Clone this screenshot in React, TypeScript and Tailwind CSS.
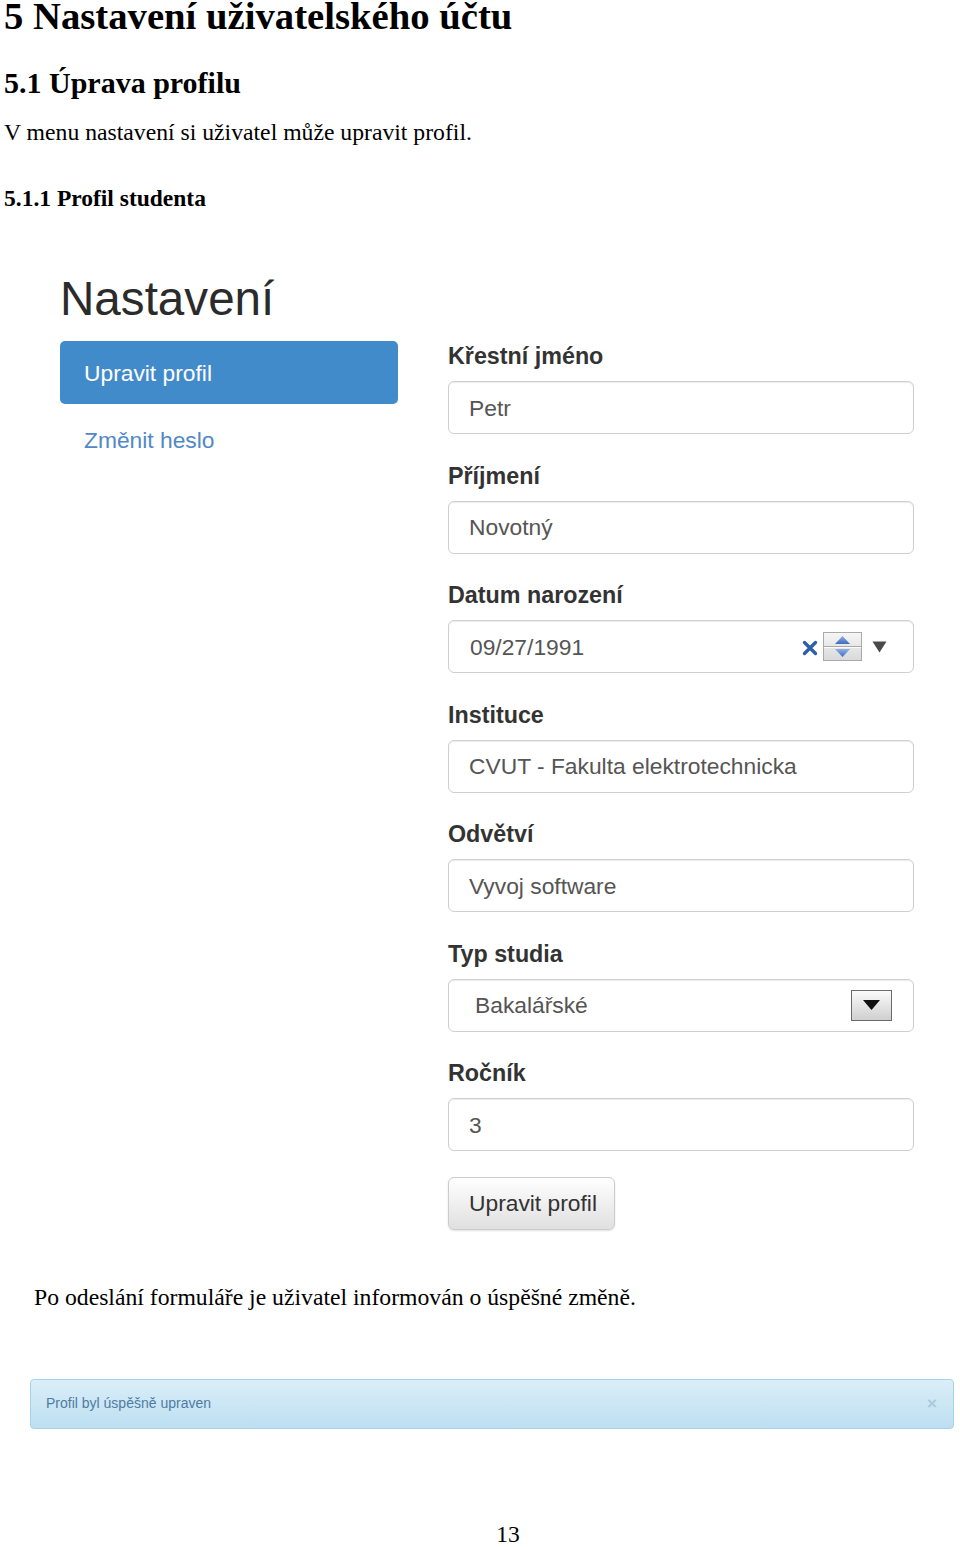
import type { ReactNode } from 'react'

// Page 13 of a user manual: chapter heading, a screenshot of the settings
// form, then the success alert shown after submitting.

function Field({ label, children }: { label: string; children: ReactNode }) {
  return (
    <div className="mb-[25.5px]">
      <div className="mb-[9px] text-[23.3px] font-bold leading-[32px] text-[#333]">{label}</div>
      {children}
    </div>
  )
}

function Box({ children, className = '' }: { children: ReactNode; className?: string }) {
  return (
    <div
      className={`flex h-[53px] items-center rounded-[6px] border-[1.5px] border-[#cfcfcf] bg-white text-[22.8px] text-[#555] shadow-[inset_0_1px_1px_rgba(0,0,0,0.08)] ${className}`}
    >
      {children}
    </div>
  )
}

function DateControls() {
  return (
    <div className="ml-auto flex items-center pr-[26px]">
      <svg width="16" height="16" viewBox="0 0 16 16" className="mr-[5px] mt-[2px]">
        <path d="M2.5 2.5 L13.5 13.5 M13.5 2.5 L2.5 13.5" stroke="#2f5fa8" strokeWidth="3.4" strokeLinecap="round" />
      </svg>
      <svg width="39" height="29" viewBox="0 0 39 29">
        <defs>
          <linearGradient id="spin" x1="0" y1="0" x2="0" y2="1">
            <stop offset="0" stopColor="#f6f6f6" />
            <stop offset="1" stopColor="#d9d9d9" />
          </linearGradient>
          <linearGradient id="arr" x1="0" y1="0" x2="0" y2="1">
            <stop offset="0" stopColor="#8fb0e6" />
            <stop offset="1" stopColor="#3f6cc0" />
          </linearGradient>
        </defs>
        <rect x="0.5" y="0.5" width="38" height="28" fill="url(#spin)" stroke="#a9a9a9" />
        <line x1="1" y1="14.5" x2="38" y2="14.5" stroke="#a9a9a9" />
        <line x1="1" y1="15.5" x2="38" y2="15.5" stroke="#fafafa" />
        <path d="M12 12 L19.5 4 L27 12 Z" fill="url(#arr)" />
        <path d="M12 17 L19.5 25 L27 17 Z" fill="url(#arr)" />
      </svg>
      <svg width="15" height="12" viewBox="0 0 15 12" className="ml-[10px]">
        <path d="M0.5 0.5 L14.5 0.5 L7.5 11.5 Z" fill="#4a4a4a" />
      </svg>
    </div>
  )
}

function SelectButton() {
  return (
    <div className="ml-auto mr-[21px] flex h-[31px] w-[41px] items-center justify-center border border-[#6b6b6b] bg-gradient-to-b from-[#fbfbfb] to-[#cfcfcf]">
      <svg width="17" height="10" viewBox="0 0 17 10">
        <path d="M0 0 L17 0 L8.5 10 Z" fill="#111" />
      </svg>
    </div>
  )
}

function SettingsScreenshot() {
  return (
    <section className="mt-[64.7px] pl-[60px] font-['Liberation_Sans',Arial,sans-serif]">
      <div className="text-[47.6px] leading-[50px] text-[#2b2b2b]">Nastavení</div>
      <div className="mt-[16.3px] grid grid-cols-[338px_466px] gap-x-[50px]">
        <nav className="flex flex-col">
          <div className="mt-[1px] flex h-[63px] items-center rounded-[5px] bg-[#428bca] pl-[24px] text-[22.8px] text-white">
            Upravit profil
          </div>
          <div className="mt-[20px] pl-[24px] text-[22.8px] leading-[32px] text-[#5189c6]">Změnit heslo</div>
        </nav>
        <div className="flex flex-col">
          <Field label="Křestní jméno">
            <Box className="pl-[20px]">Petr</Box>
          </Field>
          <Field label="Příjmení">
            <Box className="pl-[20px]">Novotný</Box>
          </Field>
          <Field label="Datum narození">
            <Box className="pl-[21px]">
              <span>09/27/1991</span>
              <DateControls />
            </Box>
          </Field>
          <Field label="Instituce">
            <Box className="pl-[20px]">CVUT - Fakulta elektrotechnicka</Box>
          </Field>
          <Field label="Odvětví">
            <Box className="pl-[20px]">Vyvoj software</Box>
          </Field>
          <Field label="Typ studia">
            <Box className="pl-[26px]">
              <span>Bakalářské</span>
              <SelectButton />
            </Box>
          </Field>
          <Field label="Ročník">
            <Box className="pl-[20px]">3</Box>
          </Field>
          <div className="flex h-[53px] w-[167px] items-center rounded-[6px] border-[1.5px] border-[#cccccc] bg-gradient-to-b from-white to-[#e0e0e0] pl-[20px] text-[22.8px] text-[#333] shadow-[0_1px_2px_rgba(0,0,0,0.12)]">
            Upravit profil
          </div>
        </div>
      </div>
    </section>
  )
}

export default function App() {
  return (
    <div className="flex h-[1547px] w-[960px] flex-col overflow-hidden bg-white font-['Liberation_Serif','Times_New_Roman',serif] text-black">
      <h1 className="-mt-[3px] pl-[4px] text-[38.7px] font-bold leading-[38px]">5 Nastavení uživatelského účtu</h1>
      <h2 className="mt-[33px] pl-[4px] text-[30px] font-bold leading-[30px]">5.1 Úprava profilu</h2>
      <p className="mt-[21.5px] pl-[4px] text-[23.7px] leading-[24px]">
        V menu nastavení si uživatel může upravit profil.
      </p>
      <h3 className="mt-[42px] pl-[4px] text-[23.5px] font-bold leading-[24px]">5.1.1 Profil studenta</h3>

      <SettingsScreenshot />

      <p className="mt-[55px] pl-[34px] text-[23.7px] leading-[24px]">
        Po odeslání formuláře je uživatel informován o úspěšné změně.
      </p>

      <div className="ml-[30px] mt-[70px] flex h-[50px] w-[924px] items-center justify-between rounded-[4px] border border-[#a6d3ea] bg-gradient-to-b from-[#dbeef8] to-[#bcdff1] pl-[15px] pr-[16px] font-['Liberation_Sans',Arial,sans-serif] text-[14px] text-[#4f7ba3]">
        <span>Profil byl úspěšně upraven</span>
        <span className="text-[17px] font-bold text-[#a9c9dc]">×</span>
      </div>

      <div className="mt-[93px] text-center text-[23.5px] leading-[24px]">
        <span className="ml-[56px]">13</span>
      </div>
    </div>
  )
}
